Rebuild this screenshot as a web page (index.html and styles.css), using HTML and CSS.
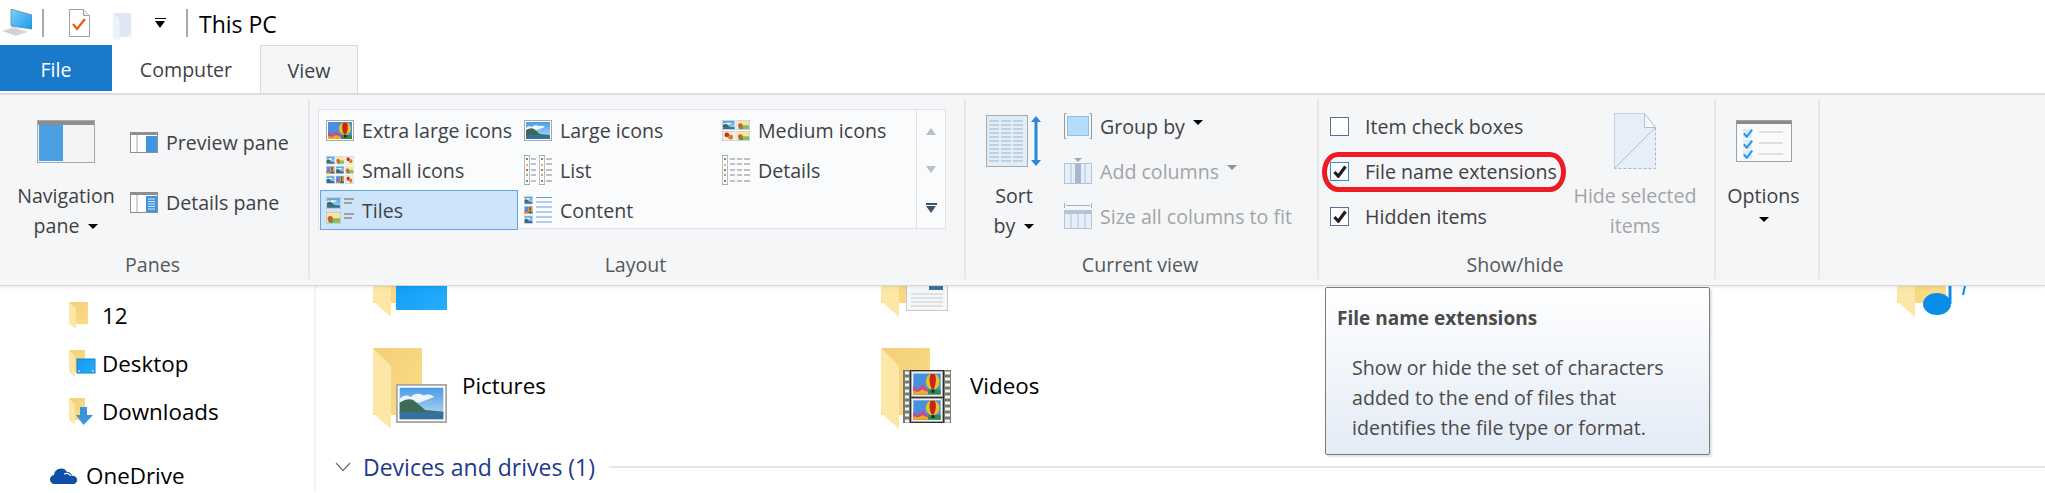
FILE: index.html
```html
<!DOCTYPE html>
<html lang="en">
<head>
    <meta charset="UTF-8">
    <title>This PC</title>
    <link rel="stylesheet" href="styles.css">
</head>
<body>
    <!-- Shared thumbnails -->
    <svg class="svg-defs" xmlns="http://www.w3.org/2000/svg">
        <defs>
            <linearGradient id="g-back" x1="0" y1="0" x2="1" y2="1"><stop offset="0" stop-color="#f3cf77"/><stop offset="1" stop-color="#fcdd88"/></linearGradient>
            <linearGradient id="g-sky" x1="0" y1="0" x2="0" y2="1"><stop offset="0" stop-color="#4c9be8"/><stop offset="1" stop-color="#bcdcf5"/></linearGradient>
            <linearGradient id="g-desk" x1="0" y1="0" x2="1" y2="1"><stop offset="0" stop-color="#0f9bf5"/><stop offset="1" stop-color="#26aefc"/></linearGradient>
            <linearGradient id="g-pc" x1="0" y1="0" x2="1" y2="1"><stop offset="0" stop-color="#7fd0fb"/><stop offset="1" stop-color="#1b9bec"/></linearGradient>
            <symbol id="folder" viewBox="0 0 49 81" preserveAspectRatio="none">
                <rect width="49" height="67" rx="1" fill="url(#g-back)"/>
                <polygon points="0,0 18,18 18,81 0,65" fill="#fde7a6"/>
            </symbol>
            <symbol id="pic-land" viewBox="0 0 28 21" preserveAspectRatio="none">
                <rect x="0.500" y="0.500" width="27" height="20" fill="#fff" stroke="#a8a8a8"/>
                <rect x="2" y="2" width="24" height="17" fill="url(#g-sky)"/>
                <path d="M2 8q3-3 6-1 3-3 7-1 4-1 6 1l-8 3H2z" fill="#eef6fc"/>
                <path d="M2 10q5-3 8-1l6 5 10 1v1H2z" fill="#3e6b55"/>
                <rect x="2" y="15" width="24" height="4" fill="#36709d"/>
            </symbol>
            <symbol id="pic-balloon" viewBox="0 0 28 21" preserveAspectRatio="none">
                <rect x="0.500" y="0.500" width="27" height="20" fill="#fff" stroke="#a8a8a8"/>
                <rect x="2" y="2" width="24" height="17" fill="#4a8fdc"/>
                <path d="M2 19v-7l4 3 4-4 5 5v3z" fill="#d2458c"/>
                <path d="M2 19v-3l4 1 4-2 5 2v2z" fill="#e8b020"/>
                <rect x="15" y="15" width="11" height="4" fill="#2f8a4c"/>
                <ellipse cx="19" cy="8.500" rx="6" ry="6.500" fill="#e9c41a"/>
                <path d="M17 2.500q-2 6 1 12h2q3-6 1-12z" fill="#c8241c"/>
                <rect x="18" y="15" width="2.500" height="2.500" fill="#222"/>
            </symbol>
            <symbol id="pic-flower" viewBox="0 0 28 21" preserveAspectRatio="none">
                <rect x="0.500" y="0.500" width="27" height="20" fill="#fff" stroke="#a8a8a8"/>
                <rect x="2" y="2" width="24" height="17" fill="#f3e6a0"/>
                <rect x="11" y="11" width="15" height="8" fill="#8fb865"/>
                <circle cx="8" cy="12" r="5" fill="#dc5a2a"/>
                <rect x="5" y="15" width="8" height="4" fill="#4f9a4f"/>
            </symbol>
            <symbol id="pic-red" viewBox="0 0 28 21" preserveAspectRatio="none">
                <rect x="0.500" y="0.500" width="27" height="20" fill="#fff" stroke="#a8a8a8"/>
                <rect x="2" y="2" width="24" height="17" fill="#f0ece0"/>
                <circle cx="10" cy="8" r="5" fill="#cf2a1a"/>
                <circle cx="18" cy="13" r="5" fill="#de7a1c"/>
            </symbol>
            <symbol id="mini-lines" viewBox="0 0 8 30" preserveAspectRatio="none">
                <rect x="0.500" y="0.500" width="7" height="29" fill="#fff" stroke="#a8a8a8"/>
                <rect x="3" y="3" width="2" height="2" fill="#3e6b55"/>
                <rect x="3" y="9" width="2" height="2" fill="#b9a23a"/>
                <rect x="3" y="14" width="2" height="2" fill="#c8241c"/>
                <rect x="3" y="19" width="2" height="2" fill="#7a9a50"/>
                <rect x="3" y="25" width="2" height="2" fill="#3e6b55"/>
            </symbol>
            <symbol id="check" viewBox="0 0 14 13">
                <path d="M1.500 7l3.800 4.200L12.500 1.500" fill="none" stroke="#1e1e1e" stroke-width="3.200"/>
            </symbol>
            <symbol id="check-blue" viewBox="0 0 12 11">
                <path d="M1 6l3.500 4L11 1.500" fill="none" stroke="#2a93e6" stroke-width="2.400"/>
            </symbol>
        </defs>
    </svg>

    <header class="titlebar">
        <svg class="qa-pc" width="30" height="28" viewBox="0 0 30 28">
            <polygon points="9,0 30,6 30,20 9,17" fill="url(#g-pc)" stroke="#5c7f98" stroke-width="0.700"/>
            <polygon points="0,22 12,18 26,23 14,27" fill="#d7dadd"/>
            <path d="M4 22l9 3.500M7 21l9 3.500M10 20l9 3.500" stroke="#b4b8bc" stroke-dasharray="1 1"/>
        </svg>
        <span class="qa-sep"></span>
        <svg class="qa-doc" width="21" height="28" viewBox="0 0 21 28">
            <path d="M.5.500h14l6 6v21H.500z" fill="#fff" stroke="#a0a0a0"/>
            <path d="M14.500.500v6h6" fill="#eee" stroke="#a0a0a0"/>
            <path d="M4 15l4 5 8-10" fill="none" stroke="#ef5a1c" stroke-width="2.300"/>
        </svg>
        <svg class="qa-folder" width="19" height="28" viewBox="0 0 19 28">
            <rect width="18" height="24" fill="#dfe7f2"/>
            <polygon points="0,1 6,5 7,28 0,25" fill="#eef3f9"/>
            <rect x="14" y="22" width="5" height="3" fill="#f3f6fa"/>
        </svg>
        <span class="qa-drop"></span>
        <span class="qa-sep qa-sep-2"></span>
        <span class="window-title">This PC</span>
    </header>

    <nav class="tabs">
        <a class="tab tab-file">File</a>
        <a class="tab tab-computer">Computer</a>
        <a class="tab tab-view">View</a>
    </nav>

    <section class="ribbon">
        <div class="group group-panes">
            <div class="group-body">
                <div class="big-btn btn-nav">
                    <div class="big-icon">
                        <svg width="58" height="43" viewBox="0 0 58 43">
                            <rect x="0.500" y="0.500" width="57" height="42" fill="#f4f4f4" stroke="#a9a9a9"/>
                            <rect x="1" y="1" width="56" height="4" fill="#8d8d8d"/>
                            <rect x="2" y="5" width="24" height="36" fill="#4b9fe2"/>
                        </svg>
                    </div>
                    <span>Navigation</span>
                    <span>pane <i class="caret"></i></span>
                </div>
                <div class="rows rows-wide">
                    <div class="row">
                        <svg class="row-icon" width="28" height="21" viewBox="0 0 28 21">
                            <rect x="0.500" y="0.500" width="27" height="20" fill="#fff" stroke="#8f8f8f"/>
                            <rect x="1" y="1" width="26" height="2" fill="#8f8f8f"/>
                            <line x1="7" y1="3" x2="7" y2="20" stroke="#aaa"/>
                            <rect x="16" y="4" width="11" height="16" fill="#3f95e0"/>
                        </svg>
                        Preview pane
                    </div>
                    <div class="row">
                        <svg class="row-icon" width="28" height="21" viewBox="0 0 28 21">
                            <rect x="0.500" y="0.500" width="27" height="20" fill="#fff" stroke="#8f8f8f"/>
                            <rect x="1" y="1" width="26" height="2" fill="#8f8f8f"/>
                            <line x1="7" y1="3" x2="7" y2="20" stroke="#aaa"/>
                            <rect x="16" y="4" width="11" height="16" fill="#3f95e0"/>
                            <path d="M18 7h7M18 9.500h7M18 12h7M18 14.500h7M18 17h7" stroke="#d6e9fa"/>
                        </svg>
                        Details pane
                    </div>
                </div>
            </div>
            <div class="group-label">Panes</div>
        </div>

        <div class="group group-layout">
            <div class="group-body">
                <div class="gallery">
                    <div class="gallery-grid">
                        <div class="cell">
                            <svg class="cell-icon" width="28" height="21"><use href="#pic-balloon"/></svg>
                            Extra large icons
                        </div>
                        <div class="cell">
                            <svg class="cell-icon" width="28" height="21"><use href="#pic-land"/></svg>
                            Large icons
                        </div>
                        <div class="cell">
                            <svg class="cell-icon" width="28" height="21" viewBox="0 0 28 21">
                                <use href="#pic-land" width="13.500" height="10"/>
                                <use href="#pic-flower" x="14.500" width="13.500" height="10"/>
                                <use href="#pic-red" y="11" width="13.500" height="10"/>
                                <use href="#pic-flower" x="14.500" y="11" width="13.500" height="10"/>
                            </svg>
                            Medium icons
                        </div>
                        <div class="cell">
                            <svg class="cell-icon" width="28" height="28" viewBox="0 0 28 28">
                                <use href="#pic-land" width="9" height="8.500"/>
                                <use href="#pic-flower" x="9.500" width="9" height="8.500"/>
                                <use href="#pic-red" x="19" width="9" height="8.500"/>
                                <use href="#pic-balloon" y="9.700" width="9" height="8.500"/>
                                <use href="#pic-land" x="9.500" y="9.700" width="9" height="8.500"/>
                                <use href="#pic-flower" x="19" y="9.700" width="9" height="8.500"/>
                                <use href="#pic-land" y="19.400" width="9" height="8.500"/>
                                <use href="#pic-balloon" x="9.500" y="19.400" width="9" height="8.500"/>
                                <use href="#pic-red" x="19" y="19.400" width="9" height="8.500"/>
                            </svg>
                            Small icons
                        </div>
                        <div class="cell">
                            <svg class="cell-icon" width="28" height="30" viewBox="0 0 28 30">
                                <use href="#mini-lines" width="6" height="30"/>
                                <path d="M7 4h5M7 9h5M7 15h5M7 20h5M7 26h5" stroke="#8a8a8a"/>
                                <use href="#mini-lines" x="15" width="6" height="30"/>
                                <path d="M22 4h6M22 9h6M22 15h6M22 20h6M22 26h6" stroke="#8a8a8a"/>
                            </svg>
                            List
                        </div>
                        <div class="cell">
                            <svg class="cell-icon" width="28" height="30" viewBox="0 0 28 30">
                                <use href="#mini-lines" width="6" height="30"/>
                                <path d="M8 4h5M15 4h5M22 4h6M8 9h5M15 9h5M22 9h6M8 15h5M15 15h5M22 15h6M8 20h5M15 20h5M22 20h6M8 26h5M15 26h5M22 26h6" stroke="#8a8a8a"/>
                            </svg>
                            Details
                        </div>
                        <div class="cell cell-selected">
                            <svg class="cell-icon" width="28" height="28" viewBox="0 0 28 28">
                                <use href="#pic-land" y="1" width="15" height="12"/>
                                <use href="#pic-flower" y="16" width="15" height="12"/>
                                <path d="M18 3h10M18 7h8M18 18h10M18 22h8" stroke="#8a8a8a" stroke-width="1.300"/>
                            </svg>
                            Tiles
                        </div>
                        <div class="cell">
                            <svg class="cell-icon" width="28" height="28" viewBox="0 0 28 28">
                                <use href="#pic-land" width="9" height="8.500"/>
                                <use href="#pic-balloon" y="9.700" width="9" height="8.500"/>
                                <use href="#pic-land" y="19.400" width="9" height="8.500"/>
                                <path d="M12 1.500h16M12 6h16M12 11h16M12 16h16M12 21h16M12 26h16" stroke="#6a9fe0"/>
                            </svg>
                            Content
                        </div>
                    </div>
                    <div class="gallery-scroll">
                        <i class="arrow-up"></i>
                        <i class="arrow-down"></i>
                        <i class="arrow-more"></i>
                    </div>
                </div>
            </div>
            <div class="group-label">Layout</div>
        </div>

        <div class="group group-view">
            <div class="group-body">
                <div class="big-btn btn-sort">
                    <div class="big-icon">
                        <svg width="56" height="52" viewBox="0 0 56 52">
                            <rect x="0.500" y="0.500" width="41" height="51" fill="#dfeef8" stroke="#a9a9a9"/>
                            <path d="M3 6h36M3 10h36M3 14h36M3 18h36M3 22h36M3 26h36M3 30h36M3 34h36M3 38h36M3 42h36M3 46h36" stroke="#9fb4c4" stroke-dasharray="10 2"/>
                            <path d="M50 1l5 6h-3.500v38H55l-5 6-5-6h3.500V7H45z" fill="#2b87d8"/>
                        </svg>
                    </div>
                    <span>Sort</span>
                    <span>by <i class="caret"></i></span>
                </div>
                <div class="rows">
                    <div class="row">
                        <svg class="row-icon" width="28" height="26" viewBox="0 0 28 26">
                            <path d="M2.500.500H.5v25h2M25.500.500h2v25h-2" fill="none" stroke="#9a9a9a"/>
                            <rect x="3.500" y="3.500" width="21" height="19" fill="#b5dcfa" stroke="#8fc0e6"/>
                        </svg>
                        Group by <i class="caret caret-up"></i>
                    </div>
                    <div class="row row-off">
                        <svg class="row-icon" width="28" height="26" viewBox="0 0 28 26">
                            <rect x="0.500" y="5.500" width="27" height="20" fill="#e6eef8" stroke="#b3c3d8"/>
                            <rect x="11" y="6" width="6" height="19" fill="#a7b7cf"/>
                            <path d="M7 6v19M21 6v19" stroke="#b3c3d8"/>
                            <polygon points="10,0 18,0 14,4" fill="#a0a8b4"/>
                        </svg>
                        Add columns <i class="caret caret-up caret-off"></i>
                    </div>
                    <div class="row row-off">
                        <svg class="row-icon" width="28" height="26" viewBox="0 0 28 26">
                            <path d="M.5 0v5M27.500 0v5M2 2.500h24" stroke="#a3b0c2"/>
                            <rect x="0.500" y="7.500" width="27" height="18" fill="#e6eef8" stroke="#b3c3d8"/>
                            <rect x="1" y="8" width="26" height="3" fill="#b3c3d8"/>
                            <path d="M7 11v14M14 11v14M21 11v14" stroke="#b3c3d8"/>
                        </svg>
                        Size all columns to fit
                    </div>
                </div>
            </div>
            <div class="group-label">Current view</div>
        </div>

        <div class="group group-show">
            <div class="group-body">
                <div class="rows rows-checks">
                    <div class="row">
                        <span class="checkbox"></span>
                        Item check boxes
                    </div>
                    <div class="row">
                        <span class="checkbox checkbox-hover"><svg width="14" height="13"><use href="#check"/></svg></span>
                        File name extensions
                    </div>
                    <div class="row">
                        <span class="checkbox"><svg width="14" height="13"><use href="#check"/></svg></span>
                        Hidden items
                    </div>
                </div>
                <div class="big-btn btn-hide row-off">
                    <div class="big-icon">
                        <svg width="42" height="56" viewBox="0 0 42 56">
                            <path d="M.5.500h30l11 14v41H.500z" fill="#e6eef9"/>
                            <path d="M41.500 14.500v41H.500" fill="none" stroke="#aab6c6" stroke-dasharray="3 2"/>
                            <path d="M.5 55.500V.500h30" fill="none" stroke="#c3cddb"/>
                            <path d="M30.500.500v14h11zM.5 55.500l41-41" fill="#f5f8fc" stroke="#b3c0d2"/>
                        </svg>
                    </div>
                    <span>Hide selected</span>
                    <span>items</span>
                </div>
            </div>
            <div class="group-label">Show/hide</div>
        </div>

        <div class="group group-options">
            <div class="group-body">
                <div class="big-btn btn-options">
                    <div class="big-icon">
                        <svg width="56" height="42" viewBox="0 0 56 42">
                            <rect x="0.500" y="0.500" width="55" height="41" fill="#fafafa" stroke="#a0a0a0"/>
                            <rect x="1" y="1" width="54" height="3" fill="#8a8a8a"/>
                            <rect x="7" y="9" width="9" height="9" fill="#dcebfa"/>
                            <rect x="7" y="20" width="9" height="9" fill="#dcebfa"/>
                            <rect x="7" y="30" width="9" height="9" fill="#dcebfa"/>
                            <use href="#check-blue" x="7" y="8" width="10" height="10"/>
                            <use href="#check-blue" x="7" y="19" width="10" height="10"/>
                            <use href="#check-blue" x="7" y="29" width="10" height="10"/>
                            <path d="M23 12h24M23 23h24M23 34h24" stroke="#c4c4c4"/>
                        </svg>
                    </div>
                    <span>Options</span>
                    <i class="caret caret-solo"></i>
                </div>
            </div>
            <div class="group-label">&nbsp;</div>
        </div>
    </section>

    <!-- Red marker somebody drew round the option -->
    <div class="marker"></div>

    <div class="content">
        <aside class="sidebar">
            <div class="nav-item nav-first">
                <svg class="nav-icon" width="27" height="27" viewBox="0 0 27 27"><use href="#folder" width="19" height="27"/></svg>
                12
            </div>
            <div class="nav-item">
                <svg class="nav-icon" width="27" height="27" viewBox="0 0 27 27">
                    <use href="#folder" width="16" height="27"/>
                    <rect x="8" y="9" width="18" height="14" fill="url(#g-desk)" stroke="#1a7fc8"/>
                    <path d="M9 21h16" stroke="#fff" stroke-dasharray="2 12"/>
                </svg>
                Desktop
            </div>
            <div class="nav-item">
                <svg class="nav-icon" width="27" height="27" viewBox="0 0 27 27">
                    <use href="#folder" width="16" height="27"/>
                    <path d="M11 9h7v8h6l-9.500 10L7 17h4z" fill="#3a94dc"/>
                </svg>
                Downloads
            </div>
            <div class="nav-item nav-cloud">
                <svg class="nav-cloud-icon" width="28" height="18" viewBox="0 0 28 18">
                    <path d="M5 18a4.500 4.500 0 0 1-1-9 7 7 0 0 1 13-3 5 5 0 0 1 5 4 4 4 0 0 1 2 8z" fill="#0f4fa8"/>
                    <path d="M14 8q4-2 7 2" fill="none" stroke="#fff" stroke-width="1.200"/>
                </svg>
                OneDrive
            </div>
        </aside>

        <main class="files">
            <div class="tiles">
                <div class="tile tile-cut">
                    <svg class="tile-icon" width="74" height="31" viewBox="0 50 74 31">
                        <use href="#folder" width="49" height="81"/>
                        <polygon points="23,40 74,40 74,74 23,74" fill="url(#g-desk)"/>
                    </svg>
                </div>
                <div class="tile tile-cut">
                    <svg class="tile-icon" width="70" height="31" viewBox="0 50 70 31">
                        <use href="#folder" width="49" height="81"/>
                        <rect x="25.500" y="40.500" width="41" height="34" fill="#f6f7f8" stroke="#c9c9c9"/>
                        <rect x="48" y="50" width="14" height="4" fill="#3f7296"/>
                        <path d="M30 58h32M30 62h32M30 66h32M30 70h32" stroke="#c6cad0"/>
                    </svg>
                </div>
                <div class="tile tile-cut tile-last">
                    <svg class="tile-icon" width="70" height="31" viewBox="0 50 70 31">
                        <use href="#folder" width="49" height="81"/>
                        <path d="M53 40v28" stroke="#0a8de8" stroke-width="3"/>
                        <ellipse cx="40" cy="68" rx="14" ry="11" fill="#0a8de8"/>
                        <path d="M68 50l-2 9" stroke="#0a8de8" stroke-width="2"/>
                    </svg>
                </div>
                <div class="tile">
                    <svg class="tile-icon tile-icon-pictures" width="74" height="81" viewBox="0 0 74 81">
                        <use href="#folder" width="49" height="81"/>
                        <use href="#pic-land" x="23" y="36" width="51" height="39"/>
                    </svg>
                    Pictures
                </div>
                <div class="tile">
                    <svg class="tile-icon" width="70" height="81" viewBox="0 0 70 81">
                        <use href="#folder" width="49" height="81"/>
                        <rect x="22" y="22" width="48" height="53" fill="#7a7a70"/>
                        <path d="M24 25h4M24 31h4M24 37h4M24 43h4M24 49h4M24 55h4M24 61h4M24 67h4M24 73h4M64 25h5M64 31h5M64 37h5M64 43h5M64 49h5M64 55h5M64 61h5M64 67h5M64 73h5" stroke="#f4f4f0" stroke-width="3"/>
                        <rect x="29" y="22" width="34" height="53" fill="#2e2e2e"/>
                        <use href="#pic-balloon" x="30" y="23" width="32" height="26"/>
                        <use href="#pic-balloon" x="30" y="50" width="32" height="24"/>
                    </svg>
                    Videos
                </div>
            </div>
            <div class="group-head">
                <svg class="chevron" width="16" height="10" viewBox="0 0 16 10">
                    <path d="M1 1l7 7.500L15 1" fill="none" stroke="#707070" stroke-width="1.200"/>
                </svg>
                <span>Devices and drives (1)</span>
                <hr class="group-rule">
            </div>
        </main>
    </div>

    <div class="tooltip">
        <h4>File name extensions</h4>
        <p>Show or hide the set of characters<br>added to the end of files that<br>identifies the file type or format.</p>
    </div>
</body>
</html>
```

FILE: styles.css
```css
/* Common Styles */
:root {
    --ribbon-bg: #f5f6f7;
    --ribbon-line: #dcdddf;
    --ribbon-text: #3f4144;
    --off-text: #a2a4a6;
    --file-blue: #1979ca;
}
html, body {
    height: 100%;
}
body {
    font-family: 'Open Sans', 'Noto Sans', sans-serif;
    font-size: 19.6px;
    color: #000;
    background: #fff;
    margin: 0;
    overflow: hidden;
    position: relative;
}
.svg-defs {
    display: block;
    width: 0;
    height: 0;
    overflow: hidden;
}

/* Title bar */
.titlebar {
    display: flex;
    align-items: center;
    height: 45px;
    padding-left: 2px;
}
.qa-sep {
    width: 2px;
    height: 28px;
    margin-left: 10px;
    background: #a8a8a8;
}
.qa-sep-2 {
    margin-left: 21px;
}
.qa-doc {
    margin-left: 25px;
}
.qa-folder {
    margin-left: 23px;
    margin-top: 8px;
}
.qa-drop {
    width: 0;
    height: 0;
    margin-left: 23px;
    margin-top: 3px;
    border-top: 7px solid #000;
    border-left: 5.5px solid transparent;
    border-right: 5.5px solid transparent;
    position: relative;
}
.qa-drop::before {
    content: "";
    position: absolute;
    left: -5.5px;
    top: -10px;
    width: 11px;
    height: 1.5px;
    background: #000;
}
.window-title {
    margin-left: 11px;
    margin-top: 2px;
    font-size: 23px;
}

/* Tabs */
.tabs {
    display: flex;
    height: 48px;
    color: var(--ribbon-text);
}
.tab {
    display: flex;
    align-items: center;
    justify-content: center;
    box-sizing: border-box;
    height: 46px;
    padding-top: 2px;
}
.tab-file {
    width: 112px;
    background: var(--file-blue);
    color: #fff;
}
.tab-computer {
    width: 148px;
}
.tab-view {
    width: 98px;
    height: 48px;
    border: 1px solid #d9d9d9;
    border-bottom: 0;
    background: var(--ribbon-bg);
}

/* Ribbon */
.ribbon {
    display: flex;
    height: 193px;
    box-sizing: border-box;
    position: relative;
    z-index: 2;
    background: var(--ribbon-bg);
    border-top: 2px solid var(--ribbon-line);
    border-bottom: 1px solid #d6d7d9;
    box-shadow: 0 2px 2px rgba(0, 0, 0, 0.06);
    color: var(--ribbon-text);
}
.group {
    display: flex;
    flex-direction: column;
    box-sizing: border-box;
    position: relative;
}
.group::after {
    content: "";
    position: absolute;
    right: 0;
    top: 4px;
    bottom: 6px;
    width: 2px;
    background: #e6e7e9;
}
.group-panes { width: 310px; }
.group-layout { width: 656px; }
.group-view { width: 353px; }
.group-show { width: 397px; }
.group-options { width: 104px; }
.group-body {
    flex: 1;
    display: flex;
}
.group-label {
    height: 30px;
    margin-bottom: 5px;
    padding-right: 5px;
    line-height: 30px;
    text-align: center;
    color: #55585c;
}

/* Big buttons and small rows */
.big-btn {
    display: flex;
    flex-direction: column;
    align-items: center;
    padding-top: 16px;
    line-height: 30px;
}
.big-icon {
    display: flex;
    align-items: center;
    justify-content: center;
    height: 60px;
    margin-bottom: 10px;
}
.btn-nav {
    width: 112px;
    margin-left: 10px;
}
.btn-sort {
    width: 70px;
    margin-left: 13px;
}
.btn-hide {
    width: 130px;
}
.btn-options {
    width: 95px;
}
.rows {
    display: flex;
    flex-direction: column;
    gap: 15px;
    padding-top: 16px;
    margin-left: 15px;
}
.rows-wide {
    gap: 30px;
    padding-top: 32px;
    margin-left: 8px;
}
.rows-checks {
    width: 240px;
    margin-left: 11px;
}
.row {
    display: flex;
    align-items: center;
    height: 30px;
    white-space: nowrap;
}
.row-icon {
    margin-right: 8px;
    flex: none;
}
.row-off {
    color: var(--off-text);
}
.caret {
    display: inline-block;
    width: 0;
    height: 0;
    margin-left: 4px;
    vertical-align: 4px;
    border-top: 5px solid #000;
    border-left: 5px solid transparent;
    border-right: 5px solid transparent;
}
.caret-up {
    margin-left: 8px;
    margin-bottom: 7px;
}
.caret-off {
    border-top-color: #8f9194;
}
.caret-solo {
    margin: 6px 0 0;
}

/* Layout gallery */
.gallery {
    display: flex;
    width: 628px;
    height: 120px;
    box-sizing: border-box;
    margin: 14px 0 0 8px;
    border: 1px solid #e2e3e6;
    background: #fafbfd;
}
.gallery-grid {
    flex: 1;
    display: grid;
    grid-template-columns: 198px 198px 198px;
    grid-auto-rows: 40px;
    padding-left: 1px;
}
.cell {
    display: flex;
    align-items: center;
    box-sizing: border-box;
    padding-left: 6px;
    white-space: nowrap;
}
.cell-selected {
    background: #cde4fb;
    border: 1px solid #69a3e0;
    padding-left: 5px;
}
.cell-icon {
    width: 28px;
    margin-right: 8px;
    flex: none;
}
.gallery-scroll {
    width: 29px;
    border-left: 1px solid #e2e3e6;
    display: flex;
    flex-direction: column;
    align-items: center;
    gap: 31px;
    padding-top: 18px;
    box-sizing: border-box;
}
.gallery-scroll i {
    display: block;
    width: 0;
    height: 0;
    border-left: 5.5px solid transparent;
    border-right: 5.5px solid transparent;
}
.arrow-up {
    border-bottom: 7px solid #b9c0c8;
}
.arrow-down {
    border-top: 7px solid #b9c0c8;
}
.gallery-scroll .arrow-more {
    border-top: 7px solid #3f5468;
    position: relative;
    margin-top: 2px;
}
.arrow-more::before {
    content: "";
    position: absolute;
    left: -5.5px;
    top: -10px;
    width: 11px;
    height: 1.5px;
    background: #3f5468;
}

/* Check boxes */
.checkbox {
    display: flex;
    align-items: center;
    justify-content: center;
    box-sizing: border-box;
    width: 19px;
    height: 19px;
    margin-right: 16px;
    flex: none;
    border: 1px solid #59719a;
    background: #fff;
}
.checkbox-hover {
    border-color: #2a92c8;
}
.marker {
    position: absolute;
    left: 1322px;
    top: 152px;
    width: 244px;
    height: 40px;
    box-sizing: border-box;
    border: 5px solid #ed1c24;
    border-radius: 16px / 20px;
    z-index: 3;
}

/* Content below the ribbon */
.content {
    display: flex;
    height: 205px;
    font-size: 22.4px;
}
.sidebar {
    width: 316px;
    flex: none;
    box-sizing: border-box;
    border-right: 2px solid #f2f2f2;
}
.nav-item {
    display: flex;
    align-items: center;
    height: 40px;
    padding-left: 69px;
    margin-bottom: 8px;
}
.nav-first {
    margin-top: 9px;
}
.nav-icon {
    margin-right: 6px;
    flex: none;
}
.nav-cloud {
    padding-left: 50px;
    margin-top: 24px;
}
.nav-cloud-icon {
    margin-right: 8px;
}
.files {
    flex: 1;
    min-width: 0;
    padding-left: 57px;
}
.tiles {
    display: grid;
    grid-template-columns: 508px 508px 508px 1fr;
}
.tile {
    display: flex;
    align-items: flex-start;
    line-height: 76px;
}
.tile-cut {
    height: 31px;
    margin-bottom: 31px;
}
.tile-last {
    grid-column: 4;
}
.tile-icon {
    margin-right: 19px;
    flex: none;
}
.tile-icon-pictures {
    margin-right: 15px;
}
.group-head {
    display: flex;
    align-items: center;
    margin: 22px 0 0 -38px;
    font-size: 23px;
    color: #1e3a8a;
}
.chevron {
    margin-right: 12px;
}
.group-rule {
    flex: 1;
    height: 2px;
    margin: 0 0 0 14px;
    border: 0;
    background: #e6e6e6;
}

/* Tooltip */
.tooltip {
    position: absolute;
    left: 1325px;
    top: 287px;
    width: 385px;
    height: 168px;
    box-sizing: border-box;
    padding: 15px 11px;
    z-index: 4;
    border: 1px solid #7b7b7b;
    border-radius: 2px;
    background: linear-gradient(#ffffff, #e3ebf6);
    box-shadow: 2px 2px 2px rgba(0, 0, 0, 0.12);
    color: #4a4a4a;
    font-size: 19.6px;
}
.tooltip h4 {
    margin: 0 0 20px;
    font-size: 19px;
    font-weight: 700;
    line-height: 30px;
}
.tooltip p {
    margin: 0 0 0 15px;
    line-height: 30px;
}
```
